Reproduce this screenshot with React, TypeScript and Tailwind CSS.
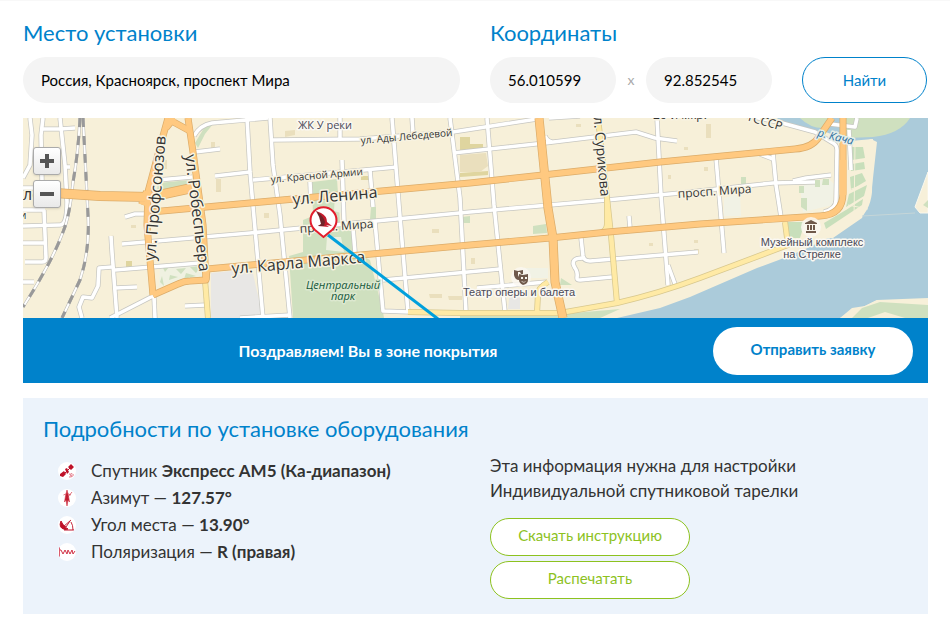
import type { ReactNode } from "react";

const WATER = "#abcbda";
const GREEN = "#cfe0bf";

const minorRoads = [
  "M30 118L32 135L30 165L23 178",
  "M43 118L41 135L42 182",
  "M41 129H60L75 128",
  "M60 118L65 165L67 202Q67 225 60 225L23 226",
  "M65 167H70",
  "M44 210L46 258Q46 262 42 262L25 262",
  "M23 243H45",
  "M23 210H45",
  "M23 188H34",
  "M23 282H34",
  "M158 180L192 177",
  "M195 152L220 149",
  "M215 176L250 172",
  "M194 136Q200 125 212 123L268 118",
  "M247 118L250 172L256 240L263 318",
  "M125 217L135 214H148",
  "M122 244L250 233L470 212L607 200L680 193L773 183L815 182",
  "M793 181L806 178L831 175",
  "M111 236L112 252L117 318",
  "M115 270L200 263",
  "M115 288L137 287",
  "M112 267L99 268L98 286L92 298L83 297L79 307L82 318",
  "M110 318L153 296",
  "M154 297L155 318",
  "M185 306L206 305",
  "M270 118L273 165L280 215L290 318",
  "M273 140L360 139L453 132L537 119",
  "M340 118V139",
  "M392 118L399 205L408 312",
  "M412 118L413 133",
  "M253 180L397 167",
  "M370 170L373 207",
  "M342 160L344 222L353 228L355 252",
  "M310 182L311 204",
  "M450 118L460 198L466 312",
  "M375 222L383 311L410 312",
  "M383 280L500 269",
  "M453 153L545 143L636 132L655 138L677 141",
  "M545 136Q547 141 552 142",
  "M240 318L290 315",
  "M487 118L494 205L505 312",
  "M657 118L661 195L668 285",
  "M668 265L675 284",
  "M629 216L630 228",
  "M581 238L583 256Q584 261 590 261L698 252",
  "M583 258Q569 258 575 268Q578 272 577 278Q577 280 580 280L612 277",
  "M477 288L547 282",
  "M549 118L580 116",
  "M716 158L724 253",
  "M760 154L773 159",
  "M773 153L776 185L781 217",
  "M730 112L782 123L815 132L833 143Q837 145 837 150L836 200Q836 209 824 212",
  "M830 124L855 127L857 118",
  "M849 130L851 170",
];

const yellowRoads = [
  "M205 280L208 318",
  "M598 118L607 198L611 235L617 303",
  "M607 200L607 224Q607 230 601 233",
  "M408 312L460 313H560L617 303Q660 293 700 278L788 245L785 222",
  "M537 313L538 294Q538 288 548 282",
];

const orangeRoads = [
  "M151 212L250 203L470 183L543 175L660 162L795 149Q812 148 819 137L832 118",
  "M153 295L178 284Q184 281 190 281L206 280L207 269L240 266L470 245L550 238L608 232L700 224L820 216Q843 215 843 193V118",
  "M168 118L163 136L148 192L147 225L153 295",
  "M188 118L193 152L203 225L206 280",
  "M168 119L190 131M166 128L174 118",
];

const railways = [
  "M80 118Q78 155 73 182Q70 215 63 232Q52 262 23 307",
  "M83 118L88 215Q90 250 80 280L62 318",
];

function Place({ x, y, children }: { x: number; y: number; children: ReactNode }) {
  return (
    <g transform={`translate(${x} ${y})`}>
      <circle r="10" fill="#faf7f0" opacity=".85" />
      <g fill="#6f594b">{children}</g>
    </g>
  );
}

const halo = "[paint-order:stroke] [stroke-linejoin:round] [stroke-width:3px]";
const street = `font-['Open_Sans','Noto_Sans',sans-serif] fill-[#333] stroke-[#f8f3e2] ${halo}`;
const place = `font-['Liberation_Sans',Arial,sans-serif] fill-[#4a4a58] stroke-[#faf8f2] ${halo}`;

function CityMap() {
  return (
    <svg
      viewBox="23 118 905 200"
      preserveAspectRatio="xMidYMid slice"
      className="block h-full w-full"
      role="img"
      aria-label="Карта"
    >
      <rect x="-500" y="0" width="2000" height="500" fill="#f7f0d9" />
      {/* rivers and shores */}
      <path d="M776 118Q800 130 823 131L850 141L873 139L872 192Q870 213 855 222Q820 246 757 268L690 297L660 308L617 318H840L877 300L928 298V118H800Z" fill={WATER} />
      <path d="M776 118Q796 129 823 133L833 143H775L760 118Z" fill="#f7f0d9" />
      <path d="M843 118H910Q900 134 873 137L847 138Z" fill={GREEN} />
      <path d="M834 141L856 144L864 142L871 139L877 142L871 196L862 218L833 238L800 240V150Z" fill="#f7f0d9" />
      <path d="M928 172L915 207L920 213H928Z" fill="#f7f0d9" stroke="#faf8ed" />
      <path d="M840 318L852 308L865 306L877 300L928 300V318Z" fill="#f7f0d9" />
      <path d="M852 318L862 308L880 302L928 305V318H905L885 312L868 318Z" fill={GREEN} />
      <path d="M923 205L928 200V208Z M800 118H828L823 128Q810 128 800 118Z M460 315L550 315L620 309L600 318H460Z" fill={GREEN} />
      <path d="M782 118Q805 131 823 132" stroke={WATER} strokeWidth="3" fill="none" />
      <path d="M862 216L915 213" stroke="#c5d6d8" />
      {/* parks and squares */}
      <path d="M852 147L863 147L865 158L852 160ZM852 164L864 162L865 169L851 171ZM850 177L862 173L866 181L851 190ZM849 194L867 185L864 196L846 207ZM846 210L863 199L862 205L838 221L826 229L824 223ZM785 222L805 222L800 238H788Z" fill="#c8dfbb" />
      <path d="M848 205L868 209M855 145L854 220M846 191L868 183" stroke="#f7f0d9" fill="none" />
      <path d="M312 182L337 179L340 222L353 228L355 252L370 260L383 312L384 318H293L289 256L303 252V220L313 216Z" fill={GREEN} />
      <path d="M327 237H341L344 252L326 250ZM335 195L341 194L341 213L334 211Z" fill="#edf0df" />
      <path d="M158 183L190 180V187L157 190Z M371 207H376V219H370ZM533 226L546 224L547 233L533 234ZM462 217L470 216V223H461ZM741 177H746V184H741ZM195 143L204 128L213 124L205 134L198 148ZM561 278L572 285H560Z" fill={GREEN} />
      <path d="M160 268L199 265L204 277L180 280L159 287Z" fill="#eff1e1" />
      <path d="M163 268L169 267L165 272ZM176 269L186 268L181 274ZM190 267L201 266L196 273ZM170 275L178 277L169 280ZM186 273L196 276L184 279ZM162 276L164 286L160 282Z" fill={GREEN} />
      <path d="M211 273L252 269L263 318H211Z" fill="#e8e7e5" />
      <path d="M800 186L828 178L834 184L833 205L803 212ZM724 198L740 193L741 216H724ZM522 268H548V278H523Z" fill="#f1f2e5" />
      <path d="M799 186H804V193H799ZM801 198H807V211L801 207ZM815 180H820V187H815ZM823 179H829V185H822Z" fill={GREEN} />
      <path d="M510 290H520V309H508Z" fill="#e8e7e5" />
      {/* blocks and buildings */}
      <g fill="#eadfbd">
        <path d="M460 137H470V144H483V149L460 151ZM460 173L488 171V175L460 177ZM126 261H132V268H126ZM361 176H369V180H361Z" fill="#dfd59f" />
        <path d="M460 155L486 153L488 166L480 172H460Z" />
        <path d="M285 131L295 130V135L285 137ZM264 213H269V218H264ZM216 179H221V192H216ZM131 225H136V228H131ZM163 160H167V169H162ZM471 258H475V264H471ZM576 124H581V127H576ZM684 147H688V150H684ZM706 124H711V138H706ZM668 175H671V179H668ZM649 243H653V246H649ZM694 249H699V254H694ZM704 167H708V171H704ZM429 294H442V298H430ZM448 296H462V300H449ZM694 240H698V243H694ZM432 229H439V233H432ZM211 142H215V151H211Z" />
      </g>
      {/* road network, casings first */}
      <g fill="none" strokeLinejoin="round" strokeLinecap="butt">
        <g stroke="#c6c6c1" strokeWidth="5">
          {minorRoads.map((d) => <path key={d} d={d} />)}
        </g>
        <g stroke="#fff" strokeWidth="3.6">
          {minorRoads.map((d) => <path key={d} d={d} />)}
        </g>
        {railways.map((d) => (
          <g key={d}>
            <path d={d} stroke="#b5b5b3" strokeWidth="3" />
            <path d={d} stroke="#fff" strokeWidth="2" />
            <path d={d} stroke="#999" strokeWidth="3" strokeDasharray="9 9" />
          </g>
        ))}
        <g stroke="#d8c88e" strokeWidth="6">
          {yellowRoads.map((d) => <path key={d} d={d} />)}
        </g>
        <g stroke="#ffeaa5" strokeWidth="4.5">
          {yellowRoads.map((d) => <path key={d} d={d} />)}
        </g>
        <g stroke="#dcac69" strokeWidth="7">
          {orangeRoads.map((d) => <path key={d} d={d} />)}
          <path d="M539 118L548 208L553 238L555 282L563 318" strokeWidth="9" />
          <path d="M55 193L100 196L150 197L192 188M143 205L148 192" strokeWidth="10" />
        </g>
        <g stroke="#ffc980" strokeWidth="5.6">
          {orangeRoads.map((d) => <path key={d} d={d} />)}
          <path d="M539 118L548 208L553 238L555 282L563 318" strokeWidth="7.6" />
          <path d="M55 193L100 196L150 197L192 188M143 205L148 192" strokeWidth="8.6" />
        </g>
        <path d="M843 160V195" stroke="#ffc980" strokeWidth="7" />
      </g>
      {/* labels */}
      <g fontSize="16" className={street}>
        <text x="23" y="200">ло</text>
        <text x="293" y="205" transform="rotate(-5 293 205)">ул. Ленина</text>
        <text x="232" y="274" transform="rotate(-5 232 274)">ул. Карла Маркса</text>
        <text x="155" y="261" transform="rotate(-85 155 261)">ул. Профсоюзов</text>
        <text x="185" y="155" transform="rotate(83 185 155)">ул. Робеспьера</text>
      </g>
      <g fontSize="14" className={street}>
        <text x="593" y="110" transform="rotate(85 593 110)">ул. Сурикова</text>
      </g>
      <g fontSize="12" className={street}>
        <text x="300" y="233" transform="rotate(-4 300 233)">просп. Мира</text>
        <text x="678" y="198" transform="rotate(-4 678 198)">просп. Мира</text>
        <text x="653" y="119">26-й мкр.</text>
        <text x="746" y="120" transform="rotate(17 746 120)">ТСССР</text>
        <text x="20" y="219" fontSize="10">и</text>
      </g>
      <g fontSize="10" className={street}>
        <text x="271" y="183" transform="rotate(-5 271 183)">ул. Красной Армии</text>
        <text x="361" y="144" transform="rotate(-5 361 144)">ул. Ады Лебедевой</text>
      </g>
      <g fontSize="11" textAnchor="middle" className={place}>
        <text x="325" y="129" className="font-['Open_Sans','Noto_Sans',sans-serif]">ЖК У реки</text>
        <text x="519" y="296">Театр оперы и балета</text>
        <text x="812" y="246">Музейный комплекс</text>
        <text x="812" y="258">на Стрелке</text>
      </g>
      <g fontSize="11" fontStyle="italic" textAnchor="middle" className={`font-['Open_Sans','Noto_Sans',sans-serif] fill-[#14583a] stroke-[#dce8cf] ${halo}`}>
        <text x="343" y="289">Центральный</text>
        <text x="343" y="300">парк</text>
      </g>
      <text x="817" y="136" fontSize="11" fontStyle="italic" transform="rotate(14 817 136)" className={`font-['Open_Sans','Noto_Sans',sans-serif] fill-[#2f6f9f] stroke-[#e5eee8] ${halo}`}>
        р. Кача
      </text>
      <Place x={521} y={277}>
        <path d="M-7-7L-3-6L2-7V-3H0L-1-5H-3V-2L-2 0V3Q-6 3-7-2Z" />
        <path fillRule="evenodd" d="M-2-3L2-2L7-3V3Q7 7 2 8Q-2 6-2 3ZM0 0V2H2V0ZM4 0V2H6V0ZM0 4Q3 7 5 4L3 5Z" />
      </Place>
      <Place x={811} y={227}>
        <path d="M-6-4L0-7L6-4V-3H-6ZM-4-2H-2V3H-4ZM-1-2H1V3H-1ZM2-2H4V3H2ZM-5 4H5V6H-5Z" />
      </Place>
      {/* beam towards the satellite and the site marker */}
      <path d="M328 235L438 319" stroke="#00a0dc" strokeWidth="3" />
      <path d="M323.500 237L315 230A13 13 0 1 1 332 230Z" fill="#fff" stroke="#e31e2d" strokeWidth="2" />
      <path d="M316 211L321 213Q327 216 327 222L332 226L326 225L329 227L318 226L322 224Q323 218 316 211Z" fill="#c31c2c" />
      <path d="M316 211Q320 217 321 224L318 226L324 226L325 222Q323 215 316 211Z" fill="#71252a" />
    </svg>
  );
}

const details = [
  {
    label: "Спутник",
    value: "Экспресс АМ5 (Ка-диапазон)",
    icon: (
      <g fill="#be1128">
        <path d="M10 5L13 2L16 5L13 8ZM2 12L6 9L8 12L5 15L2 14ZM7 7L9 6L11 10L9 12Z" />
        <path d="M7 11L12 6" stroke="#be1128" />
        <path d="M11 12Q14 13 14 11M11 15Q16 15 15 12M12 13L14 14" fill="none" stroke="#e27282" />
      </g>
    ),
  },
  {
    label: "Азимут —",
    value: "127.57°",
    icon: (
      <g fill="none" stroke="#d03445">
        <path d="M9 1L7.500 7L6.500 13L8 11L9 17L10 11L11.500 13L10.500 7Z" fill="#c01b30" strokeWidth=".6" />
        <path d="M5.500 6Q9 3 13 6M10 8L14 3" strokeWidth=".7" />
      </g>
    ),
  },
  {
    label: "Угол места —",
    value: "13.90°",
    icon: (
      <g stroke="#be1128" fill="none">
        <path d="M3 5Q0 12 7 13.500L10 13Q5 11 3 5Z" fill="#be1128" />
        <path d="M6 14H16" />
        <path d="M4 8L8 11L12 5M5 11L13 4M13 6Q15 9 15 14" strokeWidth=".9" />
      </g>
    ),
  },
  {
    label: "Поляризация —",
    value: "R (правая)",
    icon: (
      <g fill="none" stroke="#d13246">
        <path d="M1.500 4V14" strokeWidth=".8" />
        <path d="M2 7L3 7L5 11L7 7L9 11L10 7L12 11L14 7L15 11L17 8" />
      </g>
    ),
  },
];

const field =
  "h-[46px] rounded-full bg-[#f4f4f4] px-[18px] text-[15px] text-black outline-none focus:ring-1 focus:ring-[#0082cb]";
const zoomButton =
  "flex size-7 items-center justify-center rounded-[3px] border border-[#aaa] bg-linear-to-b from-white to-[#e9e9e9] shadow-sm";
const greenButton =
  "h-[38px] w-[200px] rounded-full border border-[#8dc21f] bg-white pb-1 text-[15px] text-[#8dc21f]";
const heading = "text-[22px] leading-8 text-[#0082cb]";

export default function App() {
  return (
    <main className="border-t border-[#f8f8f8] pt-4 pr-[22px] pl-[23px] font-['Lato','Open_Sans',sans-serif] text-[#333]">
      <form className="grid grid-cols-2 gap-[30px] pr-px" onSubmit={(e) => e.preventDefault()}>
        <div className="flex flex-col gap-2">
          <label htmlFor="address" className={heading}>Место установки</label>
          <input id="address" defaultValue="Россия, Красноярск, проспект Мира" className={`w-full ${field}`} />
        </div>
        <div className="flex flex-col gap-2">
          <label htmlFor="latitude" className={heading}>Координаты</label>
          <div className="flex items-center">
            <input id="latitude" defaultValue="56.010599" className={`w-0 flex-1 ${field}`} />
            <span className="w-[30px] text-center text-sm text-[#aaa]">x</span>
            <input aria-label="Долгота" defaultValue="92.852545" className={`w-0 flex-1 ${field}`} />
            <button type="submit" className="ml-[30px] h-[46px] w-[125px] rounded-full border border-[#0082cb] text-[15px] text-[#0082cb]">
              Найти
            </button>
          </div>
        </div>
      </form>

      <section className="relative mt-[15px] h-[200px] overflow-hidden">
        <CityMap />
        <div className="absolute top-[29px] left-[10px] flex flex-col gap-[5px]">
          <button aria-label="Приблизить" className={zoomButton}>
            <svg viewBox="0 0 14 14" className="size-[14px]"><path d="M7 0V14M0 7H14" stroke="#555" strokeWidth="4" /></svg>
          </button>
          <button aria-label="Отдалить" className={zoomButton}>
            <svg viewBox="0 0 14 14" className="size-[14px]"><path d="M0 7H14" stroke="#555" strokeWidth="4" /></svg>
          </button>
        </div>
      </section>

      <div className="flex items-center bg-[#0082cb] pt-[9px] pr-[15px] pb-2">
        <p className="flex-1 text-center text-base font-bold text-white">Поздравляем! Вы в зоне покрытия</p>
        <button className="h-12 w-[200px] rounded-full bg-white pb-1 text-[15px] font-bold text-[#0082cb]">
          Отправить заявку
        </button>
      </div>

      <section className="mt-[15px] bg-[#ecf3fb] py-[15px]">
        <h2 className={`pl-5 ${heading}`}>Подробности по установке оборудования</h2>
        <div className="grid grid-cols-2 gap-[30px] pr-px">
          <ul className="pt-3 pl-[35px]">
            {details.map(({ label, value, icon }) => (
              <li key={label} className="flex h-[27px] items-center gap-[15px] text-[17px] leading-[27px]">
                <svg viewBox="0 0 18 18" className="size-[18px] shrink-0 rounded-full bg-white">{icon}</svg>
                <span>{label} <b>{value}</b></span>
              </li>
            ))}
          </ul>
          <div className="flex flex-col items-start pt-2">
            <p className="mb-[15px] text-[17px] leading-[25px]">
              Эта информация нужна для настройки
              <br />
              Индивидуальной спутниковой тарелки
            </p>
            <div className="flex flex-col gap-[5px]">
              <button className={greenButton}>Скачать инструкцию</button>
              <button className={greenButton}>Распечатать</button>
            </div>
          </div>
        </div>
      </section>
    </main>
  );
}
